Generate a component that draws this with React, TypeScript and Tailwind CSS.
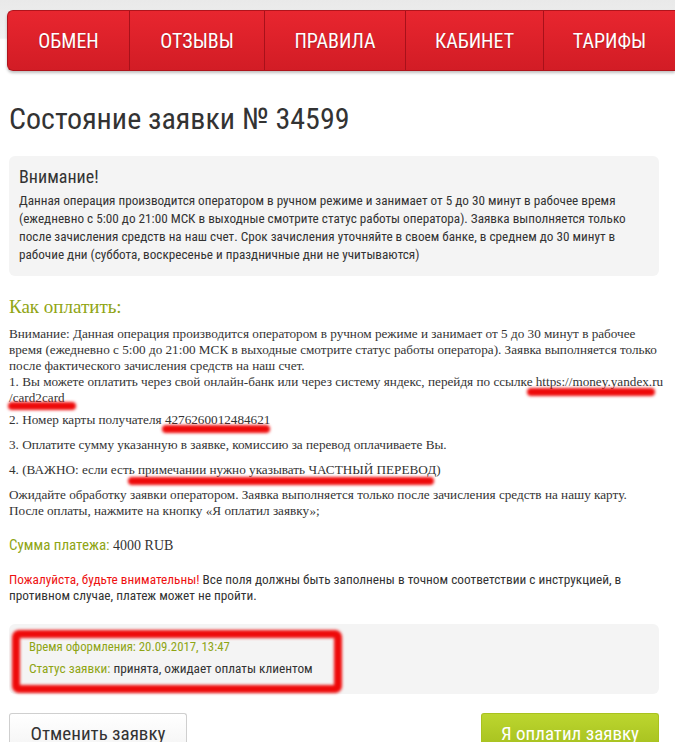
import React from 'react';

const cond = "font-['Roboto_Condensed','DejaVu_Sans_Condensed',Roboto,sans-serif]";
const serif = "font-['Liberation_Serif','Times_New_Roman',serif]";

const navItems = [
  { label: 'ОБМЕН', w: 'w-[121px]' },
  { label: 'ОТЗЫВЫ', w: 'w-[135px]' },
  { label: 'ПРАВИЛА', w: 'w-[141px]' },
  { label: 'КАБИНЕТ', w: 'w-[138px]' },
  { label: 'ТАРИФЫ', w: 'flex-1' },
];

const Mark: React.FC<{ className: string }> = ({ className }) => (
  <div className={`absolute rounded-full bg-[#ee0a0a] blur-[1.5px] ${className}`} />
);

const App: React.FC = () => {
  return (
    <div className="relative min-h-screen w-[675px] overflow-hidden bg-[linear-gradient(180deg,#e9e9e9_0px,#f1f1f1_38px,#ffffff_40px,#ffffff_100%)]">
      {/* top menu */}
      <nav className={`ml-[7px] mt-[10px] flex h-[61px] overflow-hidden rounded-l-[6px] border border-r-0 border-[#b0141c] bg-[linear-gradient(180deg,#e8262f,#d21c25)] shadow-[0_2px_3px_rgba(0,0,0,0.25)] ${cond}`}>
        {navItems.map((item, i) => (
          <div
            key={item.label}
            className={`${item.w} flex items-center justify-center text-[20px] text-white [text-shadow:0_1px_1px_rgba(0,0,0,0.25)] ${i > 0 ? 'border-l border-[#a8111a]' : ''}`}
          >
            {item.label}
          </div>
        ))}
      </nav>

      <main className="px-[9px]">
        <h1 className={`mt-[30px] text-[30px] leading-[36px] text-[#333] ${cond}`}>Состояние заявки № 34599</h1>

        <div className={`mt-[19px] w-[650px] rounded-[6px] bg-[#f4f4f4] px-[10px] pb-[12px] pt-[9px] text-[#333] ${cond}`}>
          <div className="text-[18px] leading-[24px]">Внимание!</div>
          <p className="mt-[3px] whitespace-nowrap text-[13.2px] leading-[18px]">
            Данная операция производится оператором в ручном режиме и занимает от 5 до 30 минут в рабочее время
            <br />
            (ежедневно с 5:00 до 21:00 МСК в выходные смотрите статус работы оператора). Заявка выполняется только
            <br />
            после зачисления средств на наш счет. Срок зачисления уточняйте в своем банке, в среднем до 30 минут в
            <br />
            рабочие дни (суббота, воскресенье и праздничные дни не учитываются)
          </p>
        </div>

        <h2 className={`mt-[20px] text-[19px] leading-[22px] text-[#8fa514] ${serif}`}>Как оплатить:</h2>

        <div className={`mt-[8px] whitespace-nowrap text-[13.2px] leading-[16px] text-[#333] ${serif}`}>
          <p>
            Внимание: Данная операция производится оператором в ручном режиме и занимает от 5 до 30 минут в рабочее
            <br />
            время (ежедневно с 5:00 до 21:00 МСК в выходные смотрите статус работы оператора). Заявка выполняется только
            <br />
            после фактического зачисления средств на наш счет.
            <br />
            1. Вы можете оплатить через свой онлайн-банк или через систему яндекс, перейдя по ссылке https://money.yandex.ru
            <br />
            /card2card
          </p>
          <p className="mt-[6px]">2. Номер карты получателя 4276260012484621</p>
          <p className="mt-[9px]">3. Оплатите сумму указанную в заявке, комиссию за перевод оплачиваете Вы.</p>
          <p className="mt-[9px]">4. (ВАЖНО: если есть примечании нужно указывать ЧАСТНЫЙ ПЕРЕВОД)</p>
          <p className="mt-[9px]">
            Ожидайте обработку заявки оператором. Заявка выполняется только после зачисления средств на нашу карту.
            <br />
            После оплаты, нажмите на кнопку «Я оплатил заявку»;
          </p>
          <p className="mt-[18px] text-[14px]">
            <span className={`text-[15px] text-[#8fa514] ${cond}`}>Сумма платежа:</span> 4000 RUB
          </p>
        </div>

        <p className={`mt-[18px] whitespace-nowrap text-[13.3px] leading-[16px] text-[#333] ${cond}`}>
          <span className="text-[#ee1111]">Пожалуйста, будьте внимательны!</span> Все поля должны быть заполнены в
          точном соответствии с инструкцией, в
          <br />
          противном случае, платеж может не пройти.
        </p>

        <div className={`mt-[20px] h-[70px] w-[650px] rounded-[6px] bg-[#f4f4f4] px-[20px] pt-[12px] text-[12.8px] leading-[22px] ${cond}`}>
          <div className="text-[#8fa514]">Время оформления: 20.09.2017, 13:47</div>
          <div className="text-[13.3px] text-[#333]">
            <span className="text-[#8fa514]">Статус заявки:</span> принята, ожидает оплаты клиентом
          </div>
        </div>

        <div className={`mt-[19px] flex w-[650px] justify-between ${cond}`}>
          <button className="h-[40px] w-[178px] rounded-t-[3px] border border-b-0 border-[#cfcfcf] bg-[linear-gradient(180deg,#ffffff,#f3f3f3)] pt-[2px] text-[19px] text-[#333]">
            Отменить заявку
          </button>
          <button className="h-[40px] w-[178px] rounded-t-[3px] border border-b-0 border-[#a9c21e] bg-[linear-gradient(180deg,#bcd62f,#a3bd1c)] pt-[2px] text-[19px] text-white">
            Я оплатил заявку
          </button>
        </div>
      </main>

      {/* red marker annotations */}
      <Mark className="left-[527px] top-[388px] h-[8px] w-[128px]" />
      <Mark className="left-[8px] top-[402px] h-[8px] w-[68px]" />
      <Mark className="left-[162px] top-[425px] h-[8px] w-[108px]" />
      <Mark className="left-[128px] top-[477px] h-[8px] w-[306px]" />
      <div className="absolute left-[12px] top-[630px] h-[63px] w-[330px] rounded-[7px] border-[8px] border-[#ee0a0a] blur-[1.5px]" />
    </div>
  );
};

export default App;
